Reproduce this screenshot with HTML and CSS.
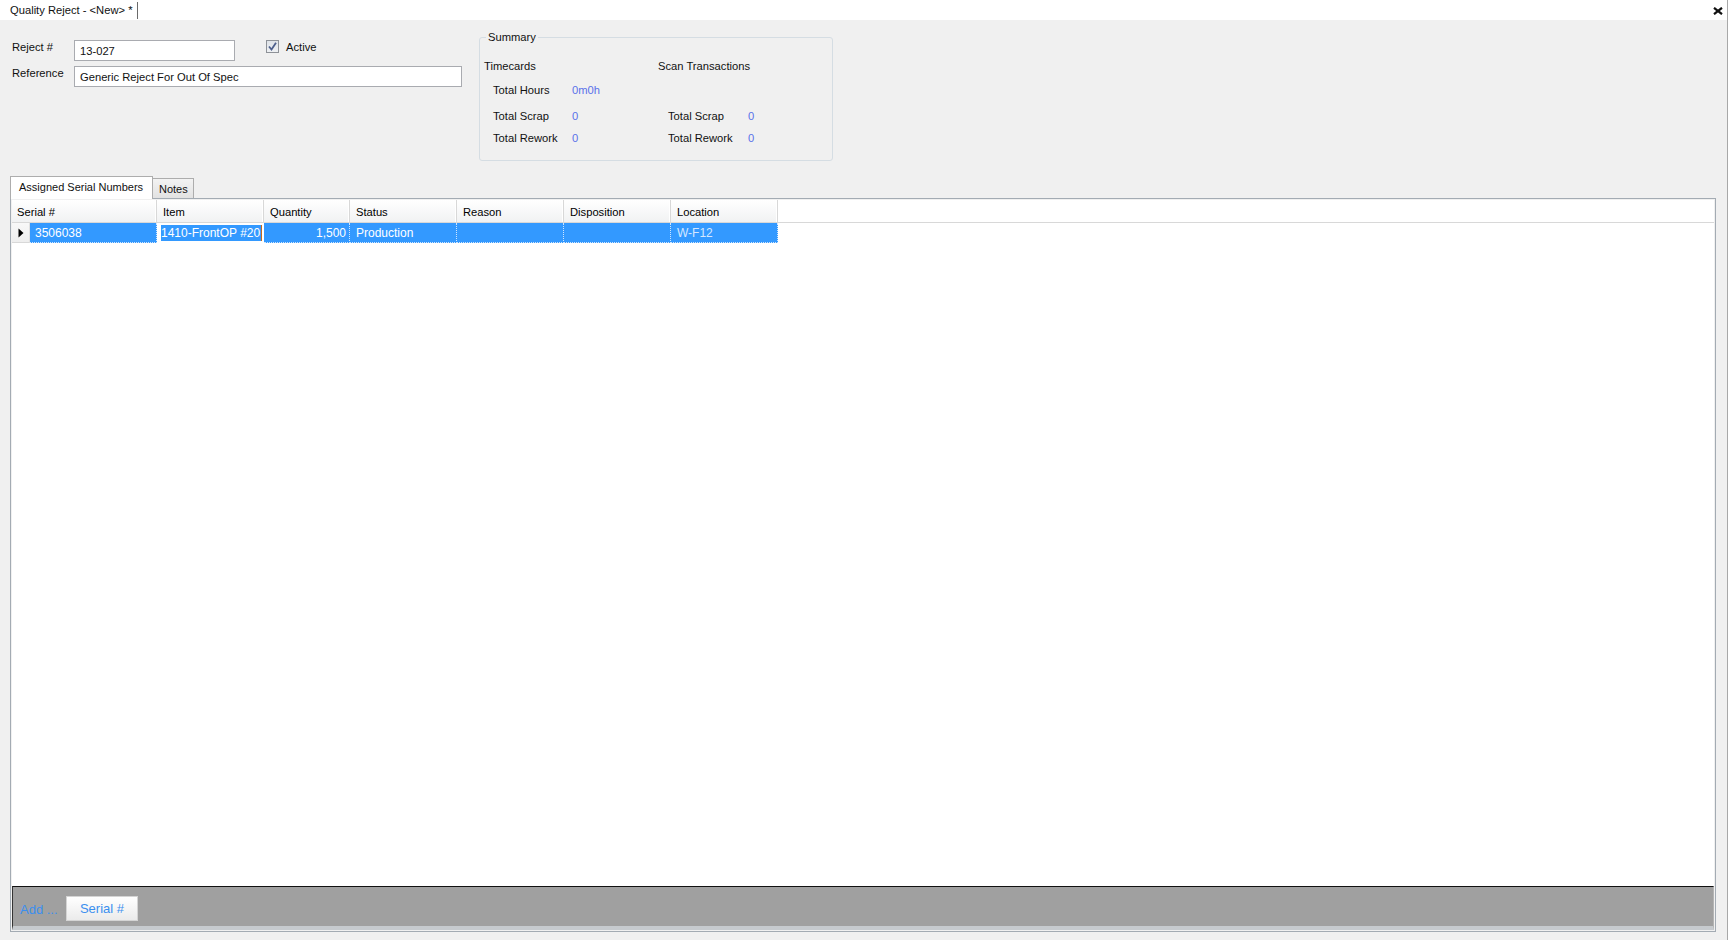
FILE: index.html
```html
<!DOCTYPE html>
<html>
<head>
<meta charset="utf-8">
<title>Quality Reject</title>
<link rel="stylesheet" href="styles.css">
</head>
<body>
<div class="window">
  <div class="titlebar">
    <div class="doc-tab">Quality Reject - &lt;New&gt; *</div>
    <div class="close">
      <svg width="10" height="8" viewBox="0 0 10 8"><path d="M1 0.8 L9 7.2 M9 0.8 L1 7.2" stroke="#111" stroke-width="2.2" fill="none"/></svg>
    </div>
  </div>
  <div class="form">
    <div class="header-area">
      <div class="fields">
        <div class="field-row">
          <span class="lbl">Reject #</span>
          <div class="textbox tb-short">13-027</div>
          <div class="check">
            <span class="box"><svg width="11" height="11" viewBox="0 0 11 11"><path d="M2 5.5 L4.5 8.5 L9 1.8" stroke="#4d5f8c" stroke-width="1.8" fill="none"/></svg></span>
            <span class="check-lbl">Active</span>
          </div>
        </div>
        <div class="field-row">
          <span class="lbl">Reference</span>
          <div class="textbox tb-long">Generic Reject For Out Of Spec</div>
        </div>
      </div>
      <div class="group">
        <span class="legend">Summary</span>
        <div class="group-cols">
          <div class="col col-left">
            <div class="col-title">Timecards</div>
            <div class="stat r-hours"><span class="k">Total Hours</span><span class="v">0m0h</span></div>
            <div class="stat r-scrap"><span class="k">Total Scrap</span><span class="v">0</span></div>
            <div class="stat r-rework"><span class="k">Total Rework</span><span class="v">0</span></div>
          </div>
          <div class="col col-right">
            <div class="col-title">Scan Transactions</div>
            <div class="stat r-hours"></div>
            <div class="stat r-scrap"><span class="k">Total Scrap</span><span class="v">0</span></div>
            <div class="stat r-rework"><span class="k">Total Rework</span><span class="v">0</span></div>
          </div>
        </div>
      </div>
    </div>

    <div class="tabstrip">
      <div class="tab active">Assigned Serial Numbers</div>
      <div class="tab inactive">Notes</div>
    </div>

    <div class="tabpanel">
      <div class="grid">
        <div class="grid-head">
          <div class="hc w-serial">Serial #</div>
          <div class="hc w-item">Item</div>
          <div class="hc w-qty">Quantity</div>
          <div class="hc w-std">Status</div>
          <div class="hc w-std">Reason</div>
          <div class="hc w-std">Disposition</div>
          <div class="hc w-std">Location</div>
        </div>
        <div class="grid-row">
          <div class="rowhdr"><svg width="6" height="10" viewBox="0 0 6 10"><path d="M0.5 0.5 L5.5 5 L0.5 9.5 Z" fill="#000"/></svg></div>
          <div class="rc w-serial-cell">3506038</div>
          <div class="rc w-item edit"><span class="sel">1410-FrontOP #20</span></div>
          <div class="rc w-qty num">1,500</div>
          <div class="rc w-std">Production</div>
          <div class="rc w-std"></div>
          <div class="rc w-std"></div>
          <div class="rc w-std dim">W-F12</div>
        </div>
        <div class="grid-fill"></div>
        <div class="bottombar">
          <span class="add">Add ...</span>
          <div class="btn">Serial #</div>
        </div>
      </div>
    </div>
  </div>
</div>
</body>
</html>
```

FILE: styles.css
```css
* { box-sizing: border-box; }
html, body { margin: 0; padding: 0; }
body {
  width: 1728px;
  height: 940px;
  overflow: hidden;
  background: #f0f0f0;
  font-family: "Liberation Sans", Arial, sans-serif;
  font-size: 11px;
  color: #111;
}
.window {
  width: 1728px;
  height: 940px;
  display: flex;
  flex-direction: column;
  border-right: 1px solid #a8a8a8;
}
.titlebar {
  height: 20px;
  background: #fff;
  display: flex;
  align-items: stretch;
  justify-content: space-between;
}
.doc-tab {
  width: 138px;
  padding: 2px 0 0 10px;
  border-right: 1px solid #6a6a6a;
  margin-top: 2px;
  margin-bottom: 1px;
  line-height: 13px;
  white-space: nowrap;
  color: #111;
  font-size: 11.2px;
}
.close {
  padding: 5px 4px 0 0;
}
.form {
  flex: 1;
  display: flex;
  flex-direction: column;
}
.header-area {
  height: 156px;
  display: flex;
}
.fields {
  width: 479px;
  padding: 20px 0 0 12px;
  display: flex;
  flex-direction: column;
  gap: 5px;
  font-size: 11.2px;
}
.field-row {
  display: flex;
  align-items: flex-start;
}
.lbl {
  width: 62px;
  padding-top: 1px;
  line-height: 13px;
}
.textbox {
  height: 21px;
  background: #fff;
  border: 1px solid #a9abb0;
  padding: 1px 5px 0 5px;
  line-height: 19px;
  white-space: nowrap;
}
.tb-short { width: 161px; }
.tb-long { width: 388px; }
.check {
  margin-left: 31px;
  display: flex;
  align-items: flex-start;
  gap: 7px;
  line-height: 13px;
}
.check-lbl { padding-top: 1px; }
.box {
  width: 13px;
  height: 13px;
  border: 1px solid #8e9298;
  background: linear-gradient(#dfe3e8, #eef0f3);
  display: flex;
  align-items: center;
  justify-content: center;
}
.group {
  margin-top: 17px;
  width: 354px;
  height: 124px;
  border: 1px solid #d5dde3;
  border-radius: 3px;
  position: relative;
  padding: 22px 0 0 4px;
  font-size: 11.2px;
}
.legend {
  position: absolute;
  top: -7px;
  left: 6px;
  padding: 0 2px;
  background: #f0f0f0;
  line-height: 13px;
}
.group-cols {
  display: flex;
}
.col {
  width: 174px;
  display: flex;
  flex-direction: column;
}
.col-title { line-height: 13px; height: 13px; }
.stat { display: flex; height: 13px; line-height: 13px; }
.col-left .stat { padding-left: 9px; }
.col-left .k { width: 79px; }
.col-right .stat { padding-left: 10px; }
.col-right .k { width: 80px; }
.v { color: #5a72ea; }
.r-hours { margin-top: 11px; }
.r-scrap { margin-top: 13px; }
.r-rework { margin-top: 9px; }

.tabstrip {
  height: 22px;
  display: flex;
  align-items: flex-start;
  padding-left: 10px;
}
.tab {
  line-height: 13px;
  white-space: nowrap;
}
.tab.active {
  width: 143px;
  height: 23px;
  background: #fff;
  border: 1px solid #adadad;
  border-bottom: none;
  padding: 4px 0 0 8px;
  position: relative;
  z-index: 2;
}
.tab.inactive {
  width: 41px;
  height: 20px;
  margin-top: 2px;
  background: linear-gradient(#f3f3f3, #e2e2e2);
  border: 1px solid #adadad;
  border-left: none;
  border-bottom: none;
  padding: 4px 0 0 6px;
}
.tabpanel {
  margin-left: 10px;
  width: 1706px;
  height: 734px;
  border: 1px solid #a3abb3;
  padding: 1px;
  position: relative;
  z-index: 1;
}
.grid {
  height: 100%;
  background: #fff;
  display: flex;
  flex-direction: column;
}
.grid-head {
  height: 23px;
  display: flex;
  border-bottom: 1px solid #d8d8d8;
}
.hc {
  height: 22px;
  line-height: 22px;
  padding-top: 1px;
  padding-left: 5px;
  background: linear-gradient(#ffffff, #f1f2f3);
  border-right: 1px solid #d8d8d8;
  box-shadow: inset -1px 0 0 #fff;
  white-space: nowrap;
  color: #000;
  font-size: 11.2px;
}
.w-serial { width: 145px; }
.w-item { width: 107px; padding-left: 6px; }
.w-qty { width: 86px; padding-left: 6px; }
.w-std { width: 107px; padding-left: 6px; }
.grid-row {
  height: 20px;
  display: flex;
}
.rowhdr {
  width: 18px;
  background: linear-gradient(#f8f8f8, #eeeeee);
  border-right: 1px solid #e0e0e0;
  border-bottom: 1px solid #d8d8d8;
  padding: 5px 0 0 6px;
}
.rowhdr svg { display: block; }
.rc {
  height: 20px;
  line-height: 20px;
  font-size: 12px;
  background: #3399ff;
  color: #fff;
  border-right: 1px dotted #cfe6ff;
  border-bottom: 1px dotted #cfe6ff;
  white-space: nowrap;
  overflow: hidden;
}
.w-serial-cell { width: 127px; padding-left: 5px; }
.rc.num { text-align: right; padding-right: 3px; padding-left: 0; }
.rc.dim { color: #d4e7ff; }
.rc.edit {
  background: #fff;
  padding: 2px 1px 1px 4px;
  border-right: 1px solid #fff;
  border-bottom: none;
}
.rc.edit .sel {
  display: block;
  height: 16px;
  line-height: 17px;
  background: #3399ff;
  color: #fff;
  overflow: hidden;
  white-space: nowrap;
  border-right: 1px solid #c46a1e;
}
.grid-fill { flex: 1; }
.bottombar {
  height: 44px;
  background: #a0a0a0;
  border-top: 1px solid #111;
  border-left: 1px solid #333;
  border-right: 1px solid #b4b4b4;
  border-bottom: 4px solid #c6cace;
  display: flex;
  align-items: center;
  padding-left: 7px;
  font-size: 13px;
}
.add {
  width: 46px;
  color: #3b8fef;
  padding-top: 5px;
}
.btn {
  width: 72px;
  height: 25px;
  background: linear-gradient(#ffffff, #ebebeb);
  border: 1px solid #d4d4d4;
  color: #3b8fef;
  text-align: center;
  line-height: 24px;
  margin-top: 3px;
}
```
